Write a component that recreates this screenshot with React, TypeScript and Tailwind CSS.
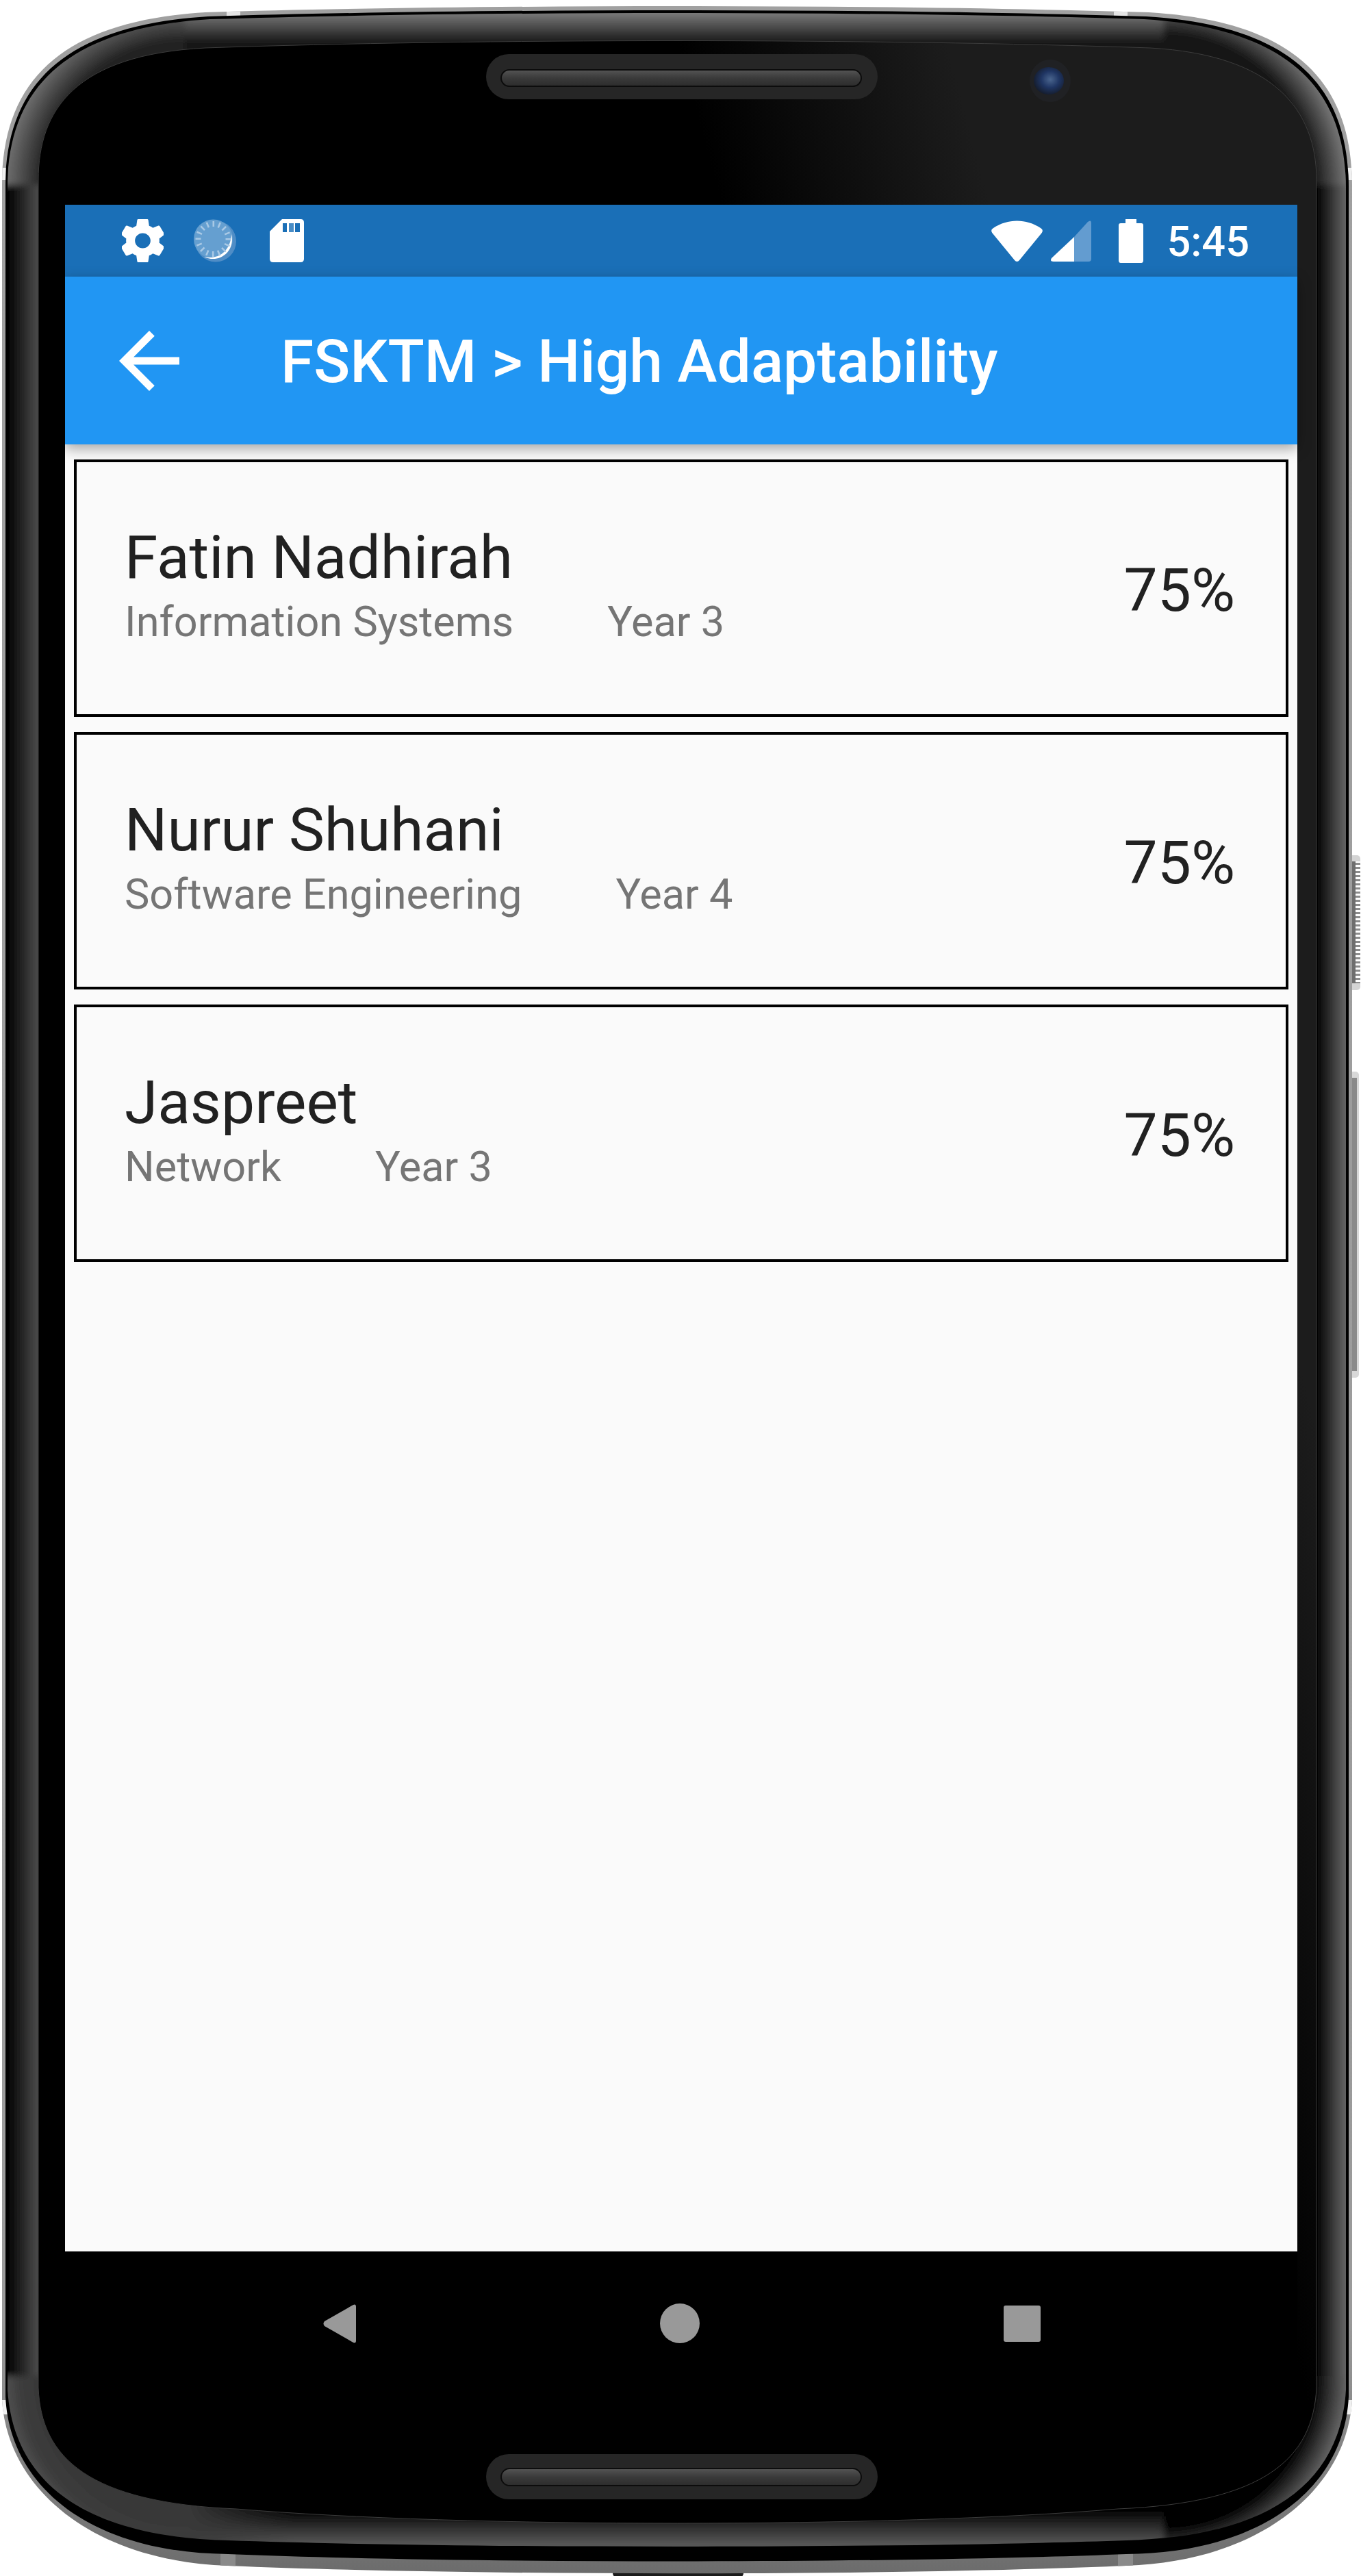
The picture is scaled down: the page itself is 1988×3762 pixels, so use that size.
const outerPath =
  "M3 270 C3 110 100 30 300 18 C700 6 1280 6 1678 18 C1878 30 1975 110 1975 270 L1975 3505 C1968 3630 1848 3740 1645 3747 C1300 3762 680 3762 333 3747 C130 3740 10 3630 3 3505 Z";
const edgePath =
  "M8 272 C8 115 105 36 304 24 C700 12 1280 12 1674 24 C1873 36 1970 115 1970 272 L1970 3500 C1964 3630 1848 3728 1645 3730 C1300 3744 680 3744 333 3730 C130 3728 14 3630 8 3500 Z";
const bandPath =
  "M11 274 C11 120 108 40 307 28 C700 16 1280 16 1671 28 C1869 40 1966 120 1966 274 L1966 3490 C1958 3630 1848 3705 1645 3710 C1300 3722 680 3722 333 3710 C130 3705 20 3630 11 3490 Z";
const facePath =
  "M56 263 C56 160 110 80 300 70 C700 56 1280 56 1680 70 C1860 80 1923 160 1923 263 L1923 3487 C1918 3590 1848 3655 1633 3664 C1300 3692 680 3692 345 3664 C130 3655 60 3590 56 3487 Z";

function Speaker({ y, slitY, height, slitHeight }: { y: number; slitY: number; height: number; slitHeight: number }) {
  return (
    <>
      <rect x="710" y={y} width="572" height={height} rx={height / 2} fill="#262626" />
      <rect x="732" y={slitY} width="526" height={slitHeight} rx={slitHeight / 2} fill="url(#slit)" stroke="#0c0c0c" strokeWidth="2" />
    </>
  );
}

function PhoneFrame() {
  return (
    <svg className="absolute inset-0" width="1988" height="3762" viewBox="0 0 1988 3762">
      <defs>
        <clipPath id="outer-clip"><path d={outerPath} /></clipPath>
        <clipPath id="band-clip"><path d={bandPath} /></clipPath>
        <filter id="soften" x="-5%" y="-5%" width="110%" height="110%">
          <feGaussianBlur stdDeviation="5" />
        </filter>
        <linearGradient id="silver" x1="0" y1="0" x2="0" y2="1">
          <stop offset="0" stopColor="#a0a0a0" />
          <stop offset="0.9" stopColor="#9a9a9a" />
          <stop offset="0.97" stopColor="#7c7c7c" />
          <stop offset="1" stopColor="#6c6c6c" />
        </linearGradient>
        <linearGradient id="face" gradientUnits="userSpaceOnUse" x1="1000" y1="100" x2="1367" y2="2">
          <stop offset="0" stopColor="#000000" />
          <stop offset="1" stopColor="#1c1c1c" />
        </linearGradient>
        <linearGradient id="band-left" gradientUnits="userSpaceOnUse" x1="11" y1="0" x2="56" y2="0">
          <stop offset="0" stopColor="#000000" />
          <stop offset="1" stopColor="#4c4c4c" />
        </linearGradient>
        <linearGradient id="band-right" gradientUnits="userSpaceOnUse" x1="1924" y1="0" x2="1966" y2="0">
          <stop offset="0" stopColor="#000000" />
          <stop offset="1" stopColor="#666666" />
        </linearGradient>
        <linearGradient id="band-top" gradientUnits="userSpaceOnUse" x1="0" y1="16" x2="0" y2="62">
          <stop offset="0" stopColor="#808080" />
          <stop offset="1" stopColor="#161616" />
        </linearGradient>
        <linearGradient id="band-bottom" gradientUnits="userSpaceOnUse" x1="0" y1="3665" x2="0" y2="3716">
          <stop offset="0" stopColor="#000000" />
          <stop offset="1" stopColor="#585858" />
        </linearGradient>
        <linearGradient id="bottom-fade" gradientUnits="userSpaceOnUse" x1="270" y1="0" x2="430" y2="0">
          <stop offset="0" stopColor="#3a3a3a" />
          <stop offset="1" stopColor="#3a3a3a" stopOpacity="0" />
        </linearGradient>
        <radialGradient id="corner-tl" gradientUnits="userSpaceOnUse" cx="270" cy="270" r="262">
          <stop offset="0.8" stopColor="#222222" />
          <stop offset="1" stopColor="#707070" />
        </radialGradient>
        <radialGradient id="corner-tr" gradientUnits="userSpaceOnUse" cx="1700" cy="270" r="268">
          <stop offset="0.82" stopColor="#161616" />
          <stop offset="1" stopColor="#787878" />
        </radialGradient>
        <radialGradient id="corner-bl" gradientUnits="userSpaceOnUse" cx="270" cy="3470" r="262">
          <stop offset="0.8" stopColor="#383838" />
          <stop offset="0.92" stopColor="#3c3c3c" />
          <stop offset="1" stopColor="#505050" />
        </radialGradient>
        <radialGradient id="corner-br" gradientUnits="userSpaceOnUse" cx="1700" cy="3470" r="268">
          <stop offset="0.82" stopColor="#000000" />
          <stop offset="1" stopColor="#666666" />
        </radialGradient>
        <linearGradient id="slit" x1="0" y1="0" x2="0" y2="1">
          <stop offset="0" stopColor="#555555" />
          <stop offset="0.5" stopColor="#3a3a3a" />
          <stop offset="1" stopColor="#2c2c2c" />
        </linearGradient>
        <radialGradient id="lens" cx="0.55" cy="0.45" r="0.6">
          <stop offset="0" stopColor="#4a658e" />
          <stop offset="0.5" stopColor="#1f3563" />
          <stop offset="1" stopColor="#141a28" />
        </radialGradient>
        <pattern id="ribs" width="12" height="6" patternUnits="userSpaceOnUse">
          <rect width="12" height="6" fill="#ffffff" />
          <rect width="12" height="3" fill="#8c8c8c" />
        </pattern>
      </defs>

      {/* side buttons and the charging slot sit behind the body */}
      <rect x="1968" y="1249" width="19" height="197" rx="5" fill="#d4d4d4" />
      <rect x="1976" y="1258" width="11" height="178" fill="url(#ribs)" />
      <rect x="1968" y="1258" width="12" height="178" fill="#6e6e6e" />
      <rect x="1968" y="1565" width="17" height="447" rx="5" fill="#d8d8d8" />
      <rect x="1968" y="1574" width="14" height="428" fill="#8a8a8a" />
      <rect x="895" y="3750" width="191" height="14" rx="6" fill="#1c1c1c" />

      <path d={outerPath} fill="url(#silver)" />
      <g clipPath="url(#outer-clip)">
        <rect x="331" y="0" width="20" height="40" fill="#e4e4e4" />
        <rect x="1627" y="0" width="20" height="40" fill="#e4e4e4" />
        <rect x="322" y="3720" width="22" height="40" fill="#8a8a8a" />
        <rect x="1633" y="3720" width="22" height="40" fill="#8a8a8a" />
        <rect x="0" y="245" width="12" height="18" fill="#f0f0f0" />
        <rect x="1966" y="245" width="12" height="18" fill="#f0f0f0" />
        <rect x="0" y="3505" width="12" height="21" fill="#f0f0f0" />
        <rect x="1966" y="3505" width="12" height="21" fill="#f0f0f0" />
      </g>
      <path d={edgePath} fill="#000000" />

      <g clipPath="url(#band-clip)">
        <g filter="url(#soften)">
          <rect x="0" y="270" width="70" height="3200" fill="url(#band-left)" />
          <rect x="1900" y="270" width="88" height="3200" fill="url(#band-right)" />
          <rect x="270" y="0" width="1430" height="100" fill="url(#band-top)" />
          <rect x="270" y="3640" width="1430" height="122" fill="url(#band-bottom)" />
          <rect x="270" y="3640" width="160" height="122" fill="url(#bottom-fade)" />
          <rect x="0" y="0" width="270" height="270" fill="url(#corner-tl)" />
          <rect x="1700" y="0" width="288" height="270" fill="url(#corner-tr)" />
          <rect x="0" y="3470" width="270" height="292" fill="url(#corner-bl)" />
          <rect x="1700" y="3470" width="288" height="292" fill="url(#corner-br)" />
        </g>
      </g>

      <path d={facePath} fill="url(#face)" stroke="#3c3c3c" strokeWidth="1" />

      <Speaker y={79} slitY={102} height={66} slitHeight={24} />
      <Speaker y={3584} slitY={3605} height={66} slitHeight={25} />

      <ellipse cx="1534" cy="118" rx="30" ry="31" fill="#202124" />
      <ellipse cx="1532" cy="118" rx="22" ry="20" fill="url(#lens)" />
    </svg>
  );
}

function GearIcon() {
  return (
    <svg width="61" height="63" viewBox="2.6 2 18.8 20" preserveAspectRatio="none">
      <path
        fill="#ffffff"
        fillRule="evenodd"
        d="M19.43 12.98c.04-.32.07-.64.07-.98s-.03-.66-.07-.98l2.11-1.65c.19-.15.24-.42.12-.64l-2-3.46c-.12-.22-.39-.3-.61-.22l-2.49 1c-.52-.4-1.08-.73-1.69-.98l-.38-2.65C14.46 2.18 14.25 2 14 2h-4c-.25 0-.46.18-.49.42l-.38 2.65c-.61.25-1.17.59-1.69.98l-2.49-1c-.23-.09-.49 0-.61.22l-2 3.46c-.13.22-.07.49.12.64l2.11 1.65c-.04.32-.07.65-.07.98s.03.66.07.98l-2.11 1.65c-.19.15-.24.42-.12.64l2 3.46c.12.22.39.3.61.22l2.49-1c.52.4 1.08.73 1.69.98l.38 2.65c.03.24.24.42.49.42h4c.25 0 .46-.18.49-.42l.38-2.65c.61-.25 1.17-.59 1.69-.98l2.49 1c.23.09.49 0 .61-.22l2-3.46c.12-.22.07-.49-.12-.64l-2.11-1.65zM12 15.5c-1.93 0-3.5-1.57-3.5-3.5s1.57-3.5 3.5-3.5 3.5 1.57 3.5 3.5-1.57 3.5-3.5 3.5z"
      />
    </svg>
  );
}

function SyncDialIcon() {
  const ticks = Array.from({ length: 16 }, (_, i) => (i * 360) / 16);
  return (
    <svg width="62" height="63" viewBox="0 0 62 63">
      <circle cx="32" cy="32.5" r="30" fill="#4f8dc6" />
      <circle cx="28.5" cy="29" r="28.5" fill="#659fd0" />
      <path d="M15 55 C34 60 54 48 55 22 C61 46 38 66 15 55 Z" fill="#ffffff" />
      {ticks.map((a) => (
        <rect key={a} x="27.5" y="3" width="2.6" height="8" fill="#a9c9e5" transform={`rotate(${a} 28.5 29)`} />
      ))}
    </svg>
  );
}

function SdCardIcon() {
  return (
    <svg width="50" height="63" viewBox="0 0 50 63">
      <path
        fill="#ffffff"
        d="M18 0 H45 Q50 0 50 5 V58 Q50 63 45 63 H5 Q0 63 0 58 V18 Z"
      />
      <rect x="19" y="6" width="6" height="13" fill="#1a6fb7" />
      <rect x="28" y="6" width="7" height="13" fill="#1a6fb7" opacity="0.8" />
      <rect x="37" y="6" width="7" height="13" fill="#1a6fb7" />
    </svg>
  );
}

function WifiIcon() {
  return (
    <svg width="75" height="60" viewBox="0 0 75 60">
      <path
        fill="#ffffff"
        d="M2 19 C-1 15 0 13 3 11 C24 -3 51 -3 72 11 C75 13 76 15 73 19 L41 58 C39 60.5 36 60.5 34 58 Z"
      />
    </svg>
  );
}

function SignalIcon() {
  return (
    <svg width="59" height="60" viewBox="0 0 59 60">
      <path fill="#639cd0" d="M34 24 L54 2 Q59 -2 59 4 V56 Q59 60 55 60 H34 Z" />
      <path fill="#ffffff" d="M34 24 V60 H4 Q-2 60 1 55 Z" />
    </svg>
  );
}

function BatteryIcon() {
  return (
    <svg width="36" height="64" viewBox="0 0 36 64">
      <path
        fill="#ffffff"
        d="M10 0 H26 V6 H33 Q36 6 36 9 V60 Q36 64 33 64 H3 Q0 64 0 60 V9 Q0 6 3 6 H10 Z"
      />
    </svg>
  );
}

function BackArrow() {
  return (
    <svg width="88" height="88" viewBox="4 4 16 16">
      <path fill="#ffffff" d="M20 11H7.83l5.59-5.59L12 4l-8 8 8 8 1.41-1.41L7.83 13H20v-2z" />
    </svg>
  );
}

type Student = { name: string; course: string; year: string; score: string };

const students: Student[] = [
  { name: "Fatin Nadhirah", course: "Information Systems", year: "Year 3", score: "75%" },
  { name: "Nurur Shuhani", course: "Software Engineering", year: "Year 4", score: "75%" },
  { name: "Jaspreet", course: "Network", year: "Year 3", score: "75%" },
];

function StudentCard({ student }: { student: Student }) {
  return (
    <div className="flex h-[376px] items-center justify-between border-[4px] border-black pl-[70px] pr-[74px]">
      <div className="pb-[12px]">
        <div className="text-[87.5px] leading-[102px] text-[#212121]">{student.name}</div>
        <div className="mt-[7px] flex gap-[137px] text-[61.25px] leading-[72px] text-[#757575]">
          <span>{student.course}</span>
          <span>{student.year}</span>
        </div>
      </div>
      <div className="pt-[5px] text-[87.5px] leading-[102px] text-[#212121]">{student.score}</div>
    </div>
  );
}

export default function App() {
  return (
    <div className="relative h-[3762px] w-[1988px] overflow-hidden bg-white pt-[299px] pl-[95px] [font-family:Roboto,sans-serif]">
      <PhoneFrame />
      <div className="relative flex h-[3199px] w-[1800px] flex-col bg-[#fafafa]">
        <div className="flex h-[105px] items-center justify-between bg-[#1a6fb7] pl-[83px] pr-[70px]">
          <div className="flex items-center">
            <GearIcon />
            <div className="ml-[44px]"><SyncDialIcon /></div>
            <div className="ml-[49px]"><SdCardIcon /></div>
          </div>
          <div className="flex items-center text-white">
            <WifiIcon />
            <div className="ml-[12px]"><SignalIcon /></div>
            <div className="ml-[40px]"><BatteryIcon /></div>
            <span className="ml-[34px] pt-[3px] text-[61.25px] font-medium leading-[72px]">5:45</span>
          </div>
        </div>

        <div className="relative z-10 flex h-[245px] items-center bg-[#2196f3] pl-[79px] shadow-[0_6px_18px_rgba(0,0,0,0.35)]">
          <BackArrow />
          <span className="ml-[148px] pt-[3px] text-[87.5px] font-medium leading-[102px] text-white">FSKTM &gt; High Adaptability</span>
        </div>

        <div className="flex flex-1 flex-col gap-[22px] px-[13px] pt-[22px]">
          {students.map((s) => (
            <StudentCard key={s.name} student={s} />
          ))}
        </div>

        <div className="flex h-[210px] items-center justify-center gap-[444px] bg-black pl-[2px]">
          <svg width="48" height="57" viewBox="0 0 48 57">
            <path fill="#999999" d="M44 1 Q48 -1 48 4 V53 Q48 58 44 56 L2 32 Q-1 28.5 2 25 Z" />
          </svg>
          <div className="h-[58px] w-[58px] rounded-full bg-[#999999]" />
          <div className="h-[53px] w-[54px] rounded-[3px] bg-[#999999]" />
        </div>
      </div>
    </div>
  );
}
